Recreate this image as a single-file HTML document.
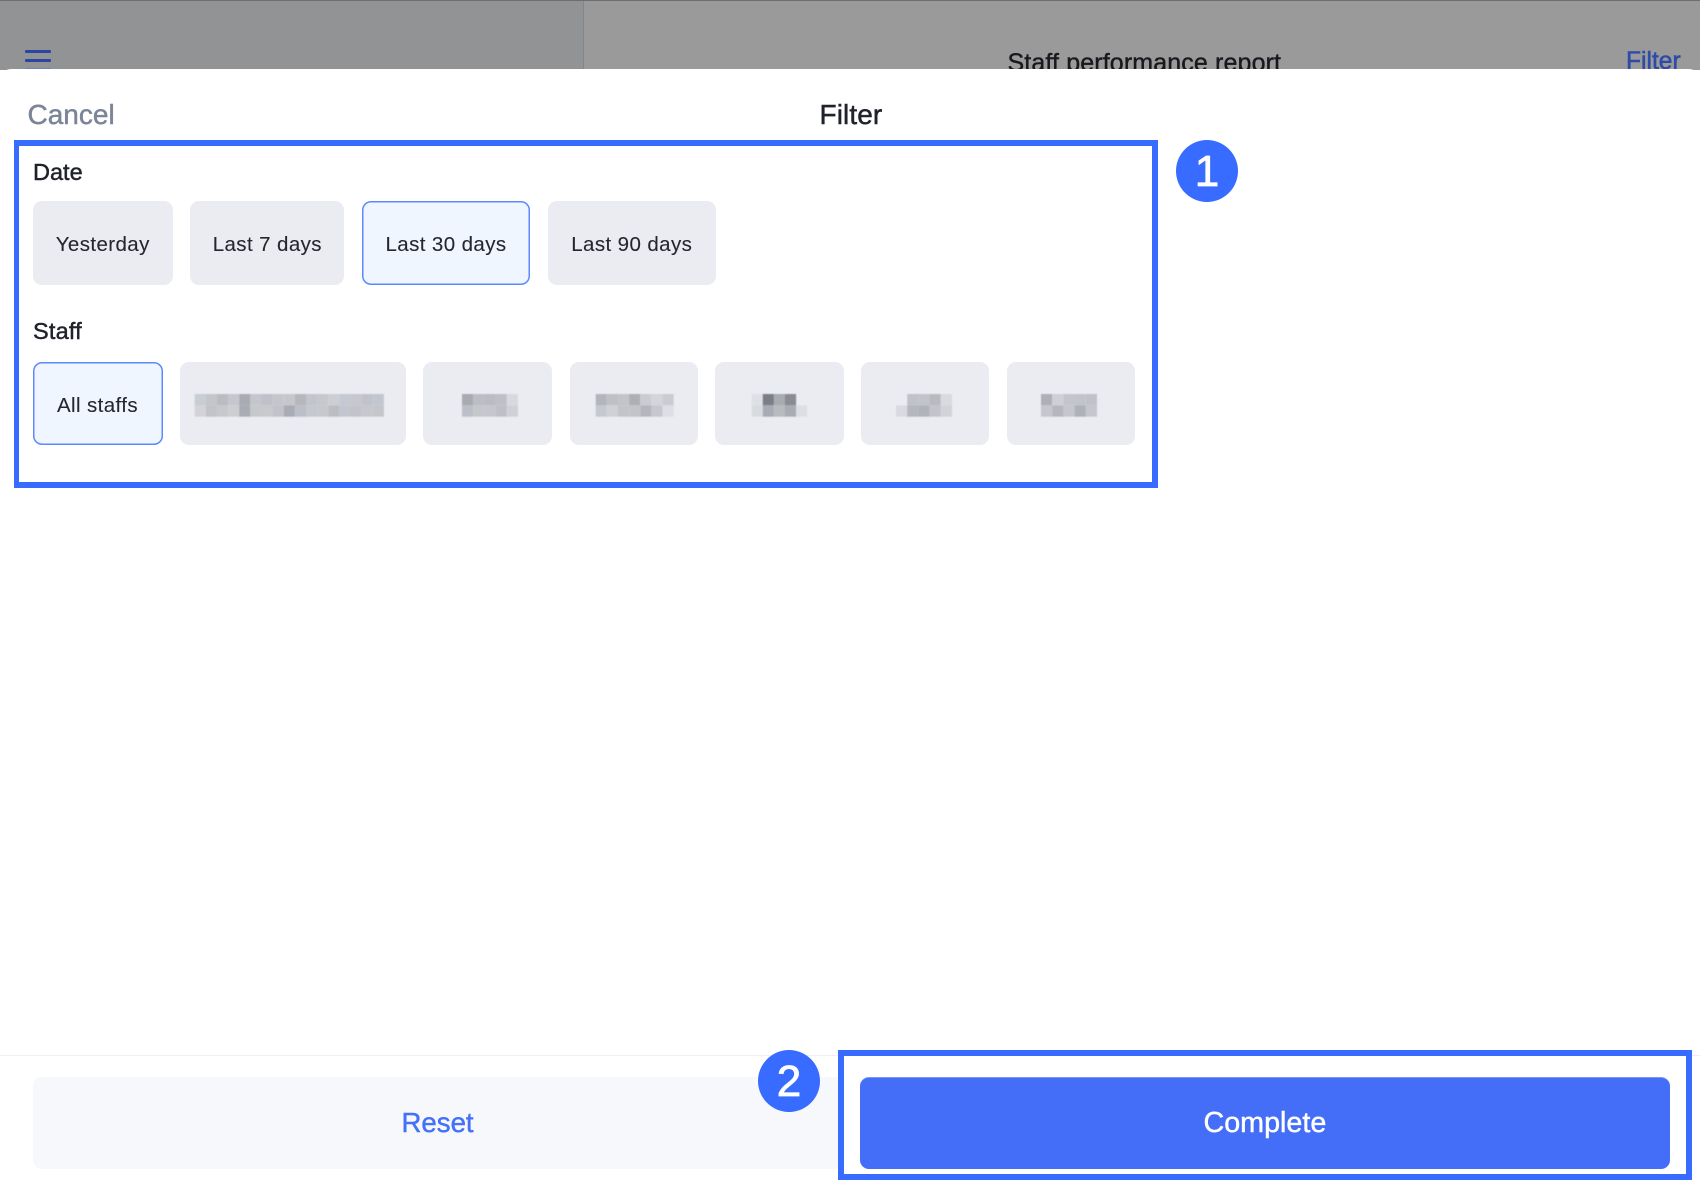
<!DOCTYPE html>
<html><head><meta charset="utf-8"><style>
html,body{margin:0;padding:0;background:#fff}
body{width:1700px;height:1181px;position:relative;overflow:hidden;font-family:"Liberation Sans",sans-serif}
.a{position:absolute;box-sizing:border-box}
.t{position:absolute;white-space:nowrap;line-height:1}
.b{position:absolute;box-sizing:border-box;background:#ebecf1;border-radius:9px;display:flex;align-items:center;justify-content:center;color:#24272e;font-size:20.5px;letter-spacing:.4px;top:201px;height:84px;padding-top:4px;-webkit-text-stroke:.1px currentColor}
.s{background:#f0f6ff;box-shadow:inset 0 0 0 1.5px #5f88ff}
.r2{top:362px;height:83px}
.m{font-weight:400;-webkit-text-stroke:.45px currentColor}
.c{position:absolute;width:62px;height:62px;border-radius:50%;background:#386bff;color:#fff;font-size:44px;line-height:64px;text-align:center;-webkit-text-stroke:.8px #fff}
</style></head><body>
<div class="a" style="left:0;top:0;width:1700px;height:70px;background:#9a9a9a"></div>
<div class="a" style="left:0;top:0;width:584px;height:70px;background:#929395"></div>
<div class="a" style="left:583px;top:0;width:1px;height:70px;background:#858688"></div>
<div class="a" style="left:0;top:0;width:1700px;height:1px;background:#6e6e6e"></div>
<div class="a" style="left:25px;top:49.5px;width:26px;height:3px;background:#2c46a0;border-radius:1px"></div>
<div class="a" style="left:25px;top:58.5px;width:26px;height:3px;background:#2c46a0;border-radius:1px"></div>
<div class="a" style="left:25px;top:67.5px;width:26px;height:1px;background:#6f82c0"></div>
<div class="t" style="left:1007.5px;top:50.5px;font-size:25px;letter-spacing:.13px;color:#17191d;-webkit-text-stroke:.4px currentColor">Staff performance report</div>
<div class="t" style="left:1626px;top:50px;font-size:24.6px;color:#2f4ba8;-webkit-text-stroke:.55px currentColor">Filter</div>

<div class="a" style="left:0;top:68.5px;width:1700px;height:1112.5px;background:#fff;border-radius:11px 11px 0 0"></div>

<div class="t m" style="left:27.5px;top:100.5px;font-size:28px;color:#7b8499">Cancel</div>
<div class="t m" style="left:819.5px;top:100.5px;font-size:28px;letter-spacing:.1px;color:#20232b">Filter</div>

<div class="a" style="left:14px;top:140px;width:1144px;height:348px;border:6px solid #386bff;border-left-width:5.5px"></div>
<div class="c" style="left:1176px;top:140px">1</div>

<div class="t m" style="left:33px;top:161px;font-size:23.5px;color:#20232b">Date</div>
<div class="b" style="left:32.5px;width:140.5px">Yesterday</div>
<div class="b" style="left:190.2px;width:154.3px">Last 7 days</div>
<div class="b s" style="left:362px;width:168px">Last 30 days</div>
<div class="b" style="left:547.5px;width:168.5px">Last 90 days</div>

<div class="t m" style="left:33px;top:320px;font-size:23.5px;letter-spacing:.2px;color:#20232b">Staff</div>
<div class="b s r2" style="left:32.5px;width:130px">All staffs</div>
<div class="b r2" style="left:180px;width:226px"></div>
<div class="b r2" style="left:423px;width:129px"></div>
<div class="b r2" style="left:569.5px;width:128px"></div>
<div class="b r2" style="left:715px;width:128.5px"></div>
<div class="b r2" style="left:860.5px;width:128.5px"></div>
<div class="b r2" style="left:1006.5px;width:128px"></div>

<svg class="a" style="left:0;top:0;filter:blur(.4px)" width="1700" height="1181" viewBox="0 0 1700 1181">
<g id="m1" transform="translate(194.7,394)">
<g transform="scale(11.13,11.35)">
<rect x="0" y="0" width="1" height="1" fill="#c8ccd3"/><rect x="1" y="0" width="1" height="1" fill="#c3c5cb"/><rect x="2" y="0" width="1" height="1" fill="#bbbcc2"/><rect x="3" y="0" width="1" height="1" fill="#c4c7ce"/><rect x="4" y="0" width="1" height="1" fill="#a8abb2"/><rect x="5" y="0" width="1" height="1" fill="#c4c6cb"/><rect x="6" y="0" width="1" height="1" fill="#bec1c9"/><rect x="7" y="0" width="1" height="1" fill="#c5c6cb"/><rect x="8" y="0" width="1" height="1" fill="#c6c7cb"/><rect x="9" y="0" width="1" height="1" fill="#b6b7bc"/><rect x="10" y="0" width="1" height="1" fill="#c2c5cc"/><rect x="11" y="0" width="1" height="1" fill="#c6c8cd"/><rect x="12" y="0" width="1" height="1" fill="#cdced3"/><rect x="13" y="0" width="1" height="1" fill="#c5c9d2"/><rect x="14" y="0" width="1" height="1" fill="#c7c8cd"/><rect x="15" y="0" width="1" height="1" fill="#c0c3ca"/><rect x="16" y="0" width="1" height="1" fill="#c3c6cf"/>
<rect x="0" y="1" width="1" height="1" fill="#d2d3d8"/><rect x="1" y="1" width="1" height="1" fill="#c2c3c8"/><rect x="2" y="1" width="1" height="1" fill="#c7c8cd"/><rect x="3" y="1" width="1" height="1" fill="#cdced2"/><rect x="4" y="1" width="1" height="1" fill="#a9acb4"/><rect x="5" y="1" width="1" height="1" fill="#c7c8cd"/><rect x="6" y="1" width="1" height="1" fill="#c7c9cd"/><rect x="7" y="1" width="1" height="1" fill="#c2c3c8"/><rect x="8" y="1" width="1" height="1" fill="#a9acb4"/><rect x="9" y="1" width="1" height="1" fill="#bbbfc8"/><rect x="10" y="1" width="1" height="1" fill="#c7c8cd"/><rect x="11" y="1" width="1" height="1" fill="#c7c8cd"/><rect x="12" y="1" width="1" height="1" fill="#bcbdc2"/><rect x="13" y="1" width="1" height="1" fill="#c3c6cf"/><rect x="14" y="1" width="1" height="1" fill="#c3c4c9"/><rect x="15" y="1" width="1" height="1" fill="#c7c8cd"/><rect x="16" y="1" width="1" height="1" fill="#c4c6ca"/>
</g></g>
<g transform="translate(462,394) scale(11.2,11.35)">
<rect x="0" y="0" width="1" height="1" fill="#a9abb0"/><rect x="1" y="0" width="1" height="1" fill="#bcbec6"/><rect x="2" y="0" width="1" height="1" fill="#bbbcc2"/><rect x="3" y="0" width="1" height="1" fill="#bec0c8"/><rect x="4" y="0" width="1" height="1" fill="#d8d9de"/>
<rect x="0" y="1" width="1" height="1" fill="#bcbfc8"/><rect x="1" y="1" width="1" height="1" fill="#c6c7cc"/><rect x="2" y="1" width="1" height="1" fill="#c6c7cc"/><rect x="3" y="1" width="1" height="1" fill="#bfc0c5"/><rect x="4" y="1" width="1" height="1" fill="#d0d1d6"/>
</g>
<g transform="translate(595.7,394) scale(11.14,11.35)">
<rect x="0" y="0" width="1" height="1" fill="#b3b5bd"/><rect x="1" y="0" width="1" height="1" fill="#bfc0c6"/><rect x="2" y="0" width="1" height="1" fill="#c3c4ca"/><rect x="3" y="0" width="1" height="1" fill="#aeafb5"/><rect x="4" y="0" width="1" height="1" fill="#cbccd1"/><rect x="5" y="0" width="1" height="1" fill="#d4d5da"/><rect x="6" y="0" width="1" height="1" fill="#cbccd2"/>
<rect x="0" y="1" width="1" height="1" fill="#c6c8d0"/><rect x="1" y="1" width="1" height="1" fill="#d0d1d6"/><rect x="2" y="1" width="1" height="1" fill="#c3c4c9"/><rect x="3" y="1" width="1" height="1" fill="#c3c4c9"/><rect x="4" y="1" width="1" height="1" fill="#b5b6bb"/><rect x="5" y="1" width="1" height="1" fill="#c6c8d0"/><rect x="6" y="1" width="1" height="1" fill="#dedfe4"/>
</g>
<g transform="translate(751.7,394) scale(11.1,11.35)">
<rect x="0" y="0" width="1" height="1" fill="#dfe0e5"/><rect x="1" y="0" width="1" height="1" fill="#7c7e85"/><rect x="2" y="0" width="1" height="1" fill="#a9abb2"/><rect x="3" y="0" width="1" height="1" fill="#8a8c94"/>
<rect x="0" y="1" width="1" height="1" fill="#d9dae0"/><rect x="1" y="1" width="1" height="1" fill="#a9abb4"/><rect x="2" y="1" width="1" height="1" fill="#b9bac0"/><rect x="3" y="1" width="1" height="1" fill="#aaacb4"/><rect x="4" y="1" width="1" height="1" fill="#dddee3"/>
</g>
<g transform="translate(896,394) scale(11.2,11.35)">
<rect x="1" y="0" width="1" height="1" fill="#c0c2ca"/><rect x="2" y="0" width="1" height="1" fill="#c3c4ca"/><rect x="3" y="0" width="1" height="1" fill="#b9bac0"/><rect x="4" y="0" width="1" height="1" fill="#d9dae0"/>
<rect x="0" y="1" width="1" height="1" fill="#d9dae0"/><rect x="1" y="1" width="1" height="1" fill="#b5b7be"/><rect x="2" y="1" width="1" height="1" fill="#b1b3bc"/><rect x="3" y="1" width="1" height="1" fill="#c3c4ca"/><rect x="4" y="1" width="1" height="1" fill="#d2d3d9"/>
</g>
<g transform="translate(1041,394) scale(11.2,11.35)">
<rect x="0" y="0" width="1" height="1" fill="#aeb0b8"/><rect x="1" y="0" width="1" height="1" fill="#cfd0d5"/><rect x="2" y="0" width="1" height="1" fill="#c3c5cc"/><rect x="3" y="0" width="1" height="1" fill="#c3c4cb"/><rect x="4" y="0" width="1" height="1" fill="#c0c2ca"/>
<rect x="0" y="1" width="1" height="1" fill="#c6c7cc"/><rect x="1" y="1" width="1" height="1" fill="#b6b7bd"/><rect x="2" y="1" width="1" height="1" fill="#c6c7cc"/><rect x="3" y="1" width="1" height="1" fill="#afb1ba"/><rect x="4" y="1" width="1" height="1" fill="#c5c6cb"/>
</g>
</svg>

<div class="a" style="left:0;top:1055px;width:1700px;height:1px;background:#eeeef4"></div>
<div class="a" style="left:32.5px;top:1077px;width:811px;height:92px;background:#f7f8fc;border-radius:9px"></div>
<div class="t m" style="left:401.5px;top:1108.5px;font-size:27.6px;color:#4570f8">Reset</div>

<div class="a" style="left:838px;top:1050px;width:854px;height:130px;border:6px solid #386bff;background:#fff"></div>
<div class="a" style="left:860px;top:1077px;width:810px;height:92px;background:#446ef8;border-radius:9px;border-top:1px solid #7a97f5"></div>
<div class="t m" style="left:1203.5px;top:1108.5px;font-size:28.7px;color:#fff">Complete</div>
<div class="c" style="left:758px;top:1050px">2</div>
</body></html>
